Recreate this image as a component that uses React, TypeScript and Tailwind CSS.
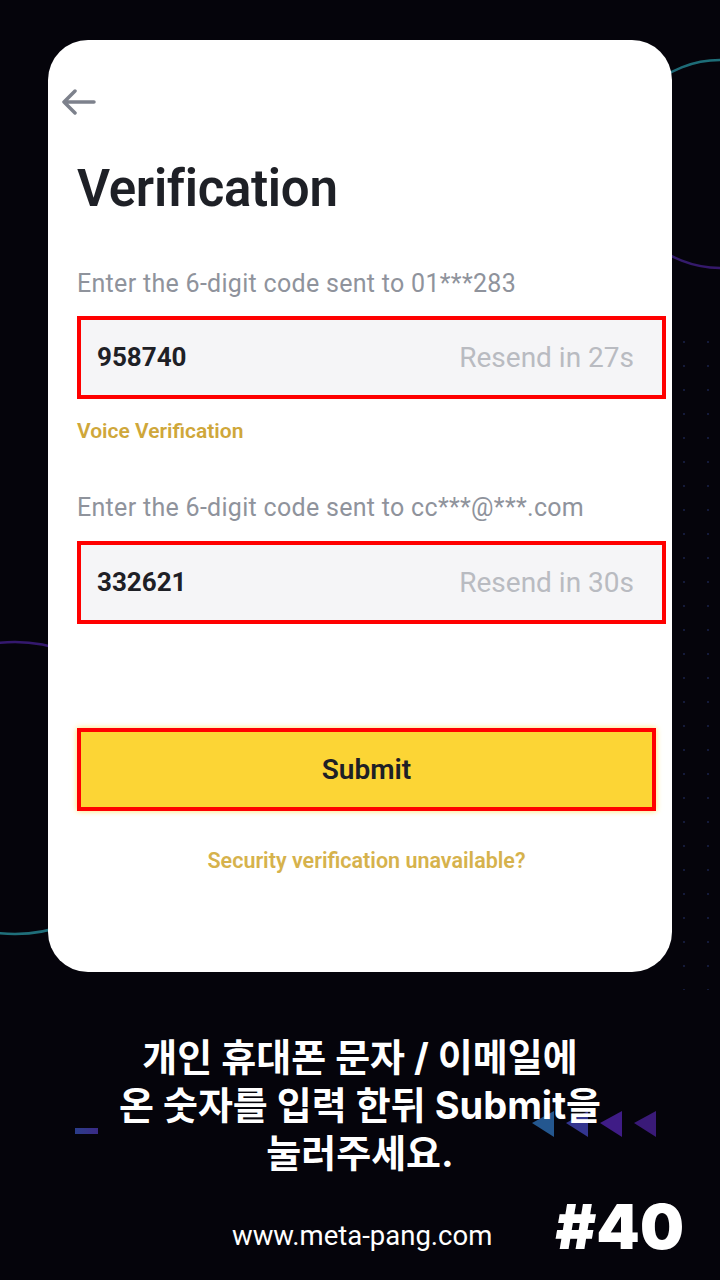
import React from 'react'

const sans = { fontFamily: 'Roboto, "Noto Sans", sans-serif' }

type CodeField = {
  label: string
  code: string
  resend: string
}

const fields: CodeField[] = [
  { label: 'Enter the 6-digit code sent to 01***283', code: '958740', resend: 'Resend in 27s' },
  { label: 'Enter the 6-digit code sent to cc***@***.com', code: '332621', resend: 'Resend in 30s' },
]

const CodeInput = ({ field }: { field: CodeField }) => (
  <div className="flex h-[83px] w-[589px] items-center justify-between border-[4px] border-[#ff0000] bg-[#f5f5f7] pl-[16px] pr-[28px]">
    <span className="text-[26px] font-bold text-[#1e2026]">{field.code}</span>
    <span className="text-[28px] text-[#b9bbc1]">{field.resend}</span>
  </div>
)

const Decorations = () => (
  <>
    <svg className="absolute left-[600px] top-[50px]" width="240" height="240" viewBox="0 0 240 240">
      <defs>
        <linearGradient id="ringA" x1="0" y1="0" x2="0" y2="1">
          <stop offset="0" stopColor="#1d6e78" />
          <stop offset="1" stopColor="#35186b" />
        </linearGradient>
      </defs>
      <circle cx="120" cy="114" r="104" fill="none" stroke="url(#ringA)" strokeWidth="2.5" />
    </svg>
    <svg className="absolute left-[-140px] top-[635px]" width="310" height="310" viewBox="0 0 310 310">
      <defs>
        <linearGradient id="ringB" x1="0" y1="0" x2="0" y2="1">
          <stop offset="0" stopColor="#34186e" />
          <stop offset="1" stopColor="#1f6f7a" />
        </linearGradient>
      </defs>
      <circle cx="155" cy="153" r="146" fill="none" stroke="url(#ringB)" strokeWidth="2.5" />
    </svg>
    <div className="absolute left-[672px] top-[330px] h-[660px] w-[48px] bg-[radial-gradient(circle,#141a3a_1px,transparent_1.5px)] bg-[length:24px_24px]" />
    <div className="absolute left-[75px] top-[1128px] h-[6px] w-[23px] bg-gradient-to-r from-[#2a3d8a] to-[#3a2a86]" />
    <svg className="absolute left-[530px] top-[1106px]" width="135" height="34" viewBox="0 0 135 34">
      <polygon points="2,17 24,5 24,31" fill="#24578f" />
      <polygon points="36,17 58,5 58,31" fill="#33358f" />
      <polygon points="70,17 92,5 92,31" fill="#3f1c86" />
      <polygon points="104,17 126,5 126,31" fill="#3a1a78" />
    </svg>
  </>
)

export default function App() {
  return (
    <div className="relative h-[1280px] w-[720px] overflow-hidden bg-[#05040b]" style={sans}>
      <Decorations />
      <div className="relative flex flex-col items-center">
        <div className="mt-[40px] flex h-[932px] w-[624px] flex-col rounded-[40px] bg-white pl-[29px]">
          <div className="mt-[49px] h-[26px]">
            <svg className="-ml-[16px]" width="36" height="26" viewBox="0 0 36 26">
              <path d="M33 13H3M14 2L3 13l11 11" fill="none" stroke="#7d818c" strokeWidth="3.5" strokeLinecap="round" strokeLinejoin="round" />
            </svg>
          </div>
          <h1 className="mt-[44px] text-[51px] font-semibold leading-[60px] tracking-[-0.3px] text-[#1e2026]">Verification</h1>

          <p className="mt-[49px] text-[25px] leading-[32px] tracking-[0.3px] text-[#8f939c]">{fields[0].label}</p>
          <div className="mt-[16px]">
            <CodeInput field={fields[0]} />
          </div>
          <p className="mt-[18px] text-[21px] font-semibold leading-[28px] text-[#cfa73a]">Voice Verification</p>

          <p className="mt-[47px] text-[25px] leading-[32px] tracking-[0.3px] text-[#8f939c]">{fields[1].label}</p>
          <div className="mt-[17px]">
            <CodeInput field={fields[1]} />
          </div>

          <button className="mt-[104px] flex h-[83px] w-[579px] items-center justify-center border-[4px] border-[#ff0000] bg-[#fcd535] text-[28px] font-semibold text-[#1e2026] shadow-[0_0_6px_#fce36a]">
            Submit
          </button>
          <p className="mt-[36px] w-[579px] text-center text-[21.5px] font-semibold leading-[28px] text-[#d6b24c]">
            Security verification unavailable?
          </p>
        </div>

        <div
          className="mt-[61px] text-center text-[38px] font-bold leading-[48px] text-white"
          style={{ fontFamily: 'Inter, "Noto Sans CJK KR", sans-serif' }}
        >
          <p>개인 휴대폰 문자 / 이메일에</p>
          <p>온 숫자를 입력 한뒤 Submit을</p>
          <p>눌러주세요.</p>
        </div>

        <div className="mt-[19px] flex w-[720px] items-center pl-[232px]">
          <span className="mt-[18px] text-[27.5px] text-white">www.meta-pang.com</span>
          <span className="ml-[63px] text-[62px] font-black leading-[62px] text-white" style={{ fontFamily: 'Inter, sans-serif' }}>
            #40
          </span>
        </div>
      </div>
    </div>
  )
}
